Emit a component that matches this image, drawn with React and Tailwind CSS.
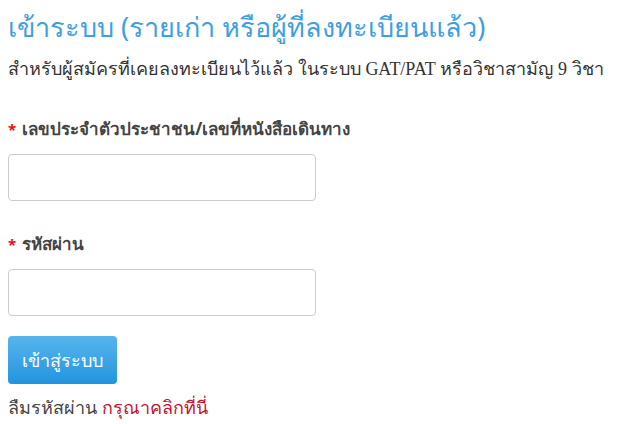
import React from 'react';

const App = () => {
    return (
        <div className="min-h-screen bg-white px-2 pt-[8px] text-[#333] font-['Noto_Sans',sans-serif]">
            <h1 className="text-[27px] leading-[38px] text-[#3ea0e0]">เข้าระบบ (รายเก่า หรือผู้ที่ลงทะเบียนแล้ว)</h1>
            <p className="mt-[8px] text-[18px] leading-[28px] text-[#333]">
                สำหรับผู้สมัครที่เคยลงทะเบียนไว้แล้ว ในระบบ <span className="font-['Liberation_Serif',serif]">GAT/PAT</span> หรือวิชาสามัญ <span className="font-['Liberation_Serif',serif]">9</span> วิชา
            </p>

            <form className="mt-[33px]" onSubmit={(e) => e.preventDefault()}>
                <label className="block text-[17px] leading-[26px] font-bold text-[#444]">
                    <span className="text-[#e8101a] text-[15px] mr-[6px]">*</span>เลขประจำตัวประชาชน/เลขที่หนังสือเดินทาง
                </label>
                <input type="text" className="mt-[12px] block w-[308px] h-[47px] rounded-[4px] border border-[#ccc] px-3 outline-none" />

                <label className="mt-[30px] block text-[17px] leading-[26px] font-bold text-[#444]">
                    <span className="text-[#e8101a] text-[15px] mr-[6px]">*</span>รหัสผ่าน
                </label>
                <input type="password" className="mt-[12px] block w-[308px] h-[47px] rounded-[4px] border border-[#ccc] px-3 outline-none" />

                <button className="mt-[20px] block w-[109px] h-[48px] rounded-[4px] bg-gradient-to-b from-[#56b5ec] to-[#1f94df] text-white text-[18px]">
                    เข้าสู่ระบบ
                </button>

                <p className="mt-[10px] text-[18px] leading-[26px] text-[#444]">
                    ลืมรหัสผ่าน <a href="#" className="text-[#c41230]">กรุณาคลิกที่นี่</a>
                </p>
            </form>
        </div>
    );
};

export default App;
